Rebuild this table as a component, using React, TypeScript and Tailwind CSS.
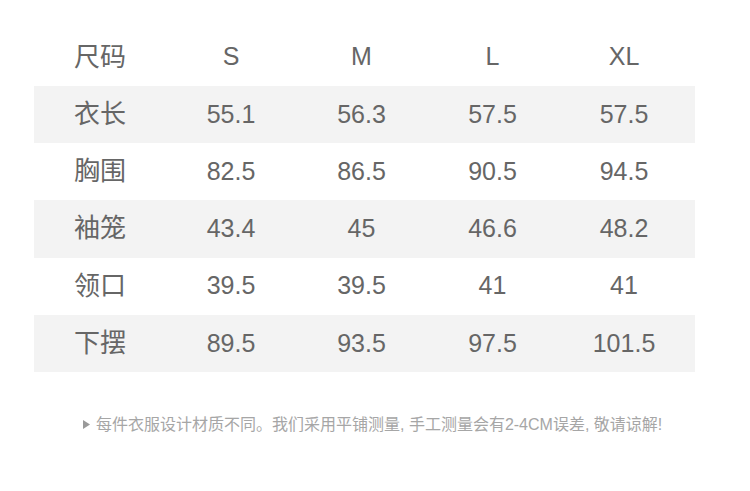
const sizes = ['S', 'M', 'L', 'XL']

const rows: { label: string; values: string[] }[] = [
  { label: '衣长', values: ['55.1', '56.3', '57.5', '57.5'] },
  { label: '胸围', values: ['82.5', '86.5', '90.5', '94.5'] },
  { label: '袖笼', values: ['43.4', '45', '46.6', '48.2'] },
  { label: '领口', values: ['39.5', '39.5', '41', '41'] },
  { label: '下摆', values: ['89.5', '93.5', '97.5', '101.5'] },
]

const font = { fontFamily: '"Liberation Sans", "Noto Sans CJK SC", sans-serif' }

function Row({ label, values, shaded, tall }: { label: string; values: string[]; shaded?: boolean; tall?: boolean }) {
  return (
    <div
      className={`grid grid-cols-[132px_130px_131px_131px_132px] items-center pr-[5px] ${tall ? 'h-[58px]' : 'h-[57.2px]'} ${shaded ? 'bg-[#f3f3f3]' : 'bg-white'}`}
    >
      <div className="text-center text-[26px] text-[#666]">{label}</div>
      {values.map((v, i) => (
        <div key={i} className="text-center text-[25px] text-[#666]">
          {v}
        </div>
      ))}
    </div>
  )
}

export default function App() {
  return (
    <div className="h-[491px] w-[750px] bg-white pt-[28px]" style={font}>
      <div className="ml-[34px] w-[661px]">
        <Row label="尺码" values={sizes} tall />
        {rows.map((r, i) => (
          <Row key={r.label} label={r.label} values={r.values} shaded={i % 2 === 0} />
        ))}
      </div>

      <div className="mt-[41px] flex items-center pl-[83px] text-[16px] text-[#a6a6a6]">
        <svg width="7" height="9" viewBox="0 0 7 9" className="mr-[6px]">
          <path d="M0 0 L7 4.5 L0 9 Z" fill="#9a9a9a" />
        </svg>
        <span>每件衣服设计材质不同。我们采用平铺测量, 手工测量会有2-4CM误差, 敬请谅解!</span>
      </div>
    </div>
  )
}
